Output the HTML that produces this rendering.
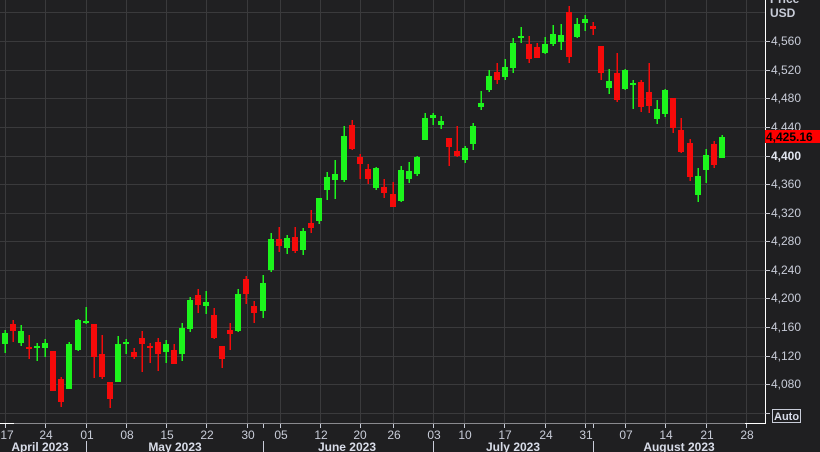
<!DOCTYPE html>
<html><head><style>
html,body{margin:0;padding:0;background:#1f1f21;overflow:hidden}
svg{display:block}
text{font-family:"Liberation Sans",sans-serif}
</style></head><body>
<svg width="820" height="452" viewBox="0 0 820 452" xmlns="http://www.w3.org/2000/svg">
<rect width="820" height="452" fill="#1f1f21"/>
<rect x="0" y="0" width="765" height="423" fill="#202022"/>
<g stroke="#3a3a3c" stroke-width="1">
<line x1="0" x2="765" y1="12.5" y2="12.5"/>
<line x1="0" x2="765" y1="41.5" y2="41.5"/><line x1="0" x2="765" y1="70.5" y2="70.5"/><line x1="0" x2="765" y1="98.5" y2="98.5"/><line x1="0" x2="765" y1="127.5" y2="127.5"/><line x1="0" x2="765" y1="156.5" y2="156.5"/><line x1="0" x2="765" y1="184.5" y2="184.5"/><line x1="0" x2="765" y1="213.5" y2="213.5"/><line x1="0" x2="765" y1="241.5" y2="241.5"/><line x1="0" x2="765" y1="270.5" y2="270.5"/><line x1="0" x2="765" y1="298.5" y2="298.5"/><line x1="0" x2="765" y1="327.5" y2="327.5"/><line x1="0" x2="765" y1="356.5" y2="356.5"/><line x1="0" x2="765" y1="384.5" y2="384.5"/><line x1="0" x2="765" y1="413.5" y2="413.5"/>
<line y1="0" y2="423" x1="5.5" x2="5.5"/><line y1="0" y2="423" x1="45.5" x2="45.5"/><line y1="0" y2="423" x1="86.5" x2="86.5"/><line y1="0" y2="423" x1="126.5" x2="126.5"/><line y1="0" y2="423" x1="166.5" x2="166.5"/><line y1="0" y2="423" x1="206.5" x2="206.5"/><line y1="0" y2="423" x1="247.5" x2="247.5"/><line y1="0" y2="423" x1="280.5" x2="280.5"/><line y1="0" y2="423" x1="320.5" x2="320.5"/><line y1="0" y2="423" x1="360.5" x2="360.5"/><line y1="0" y2="423" x1="393.5" x2="393.5"/><line y1="0" y2="423" x1="433.5" x2="433.5"/><line y1="0" y2="423" x1="464.5" x2="464.5"/><line y1="0" y2="423" x1="504.5" x2="504.5"/><line y1="0" y2="423" x1="545.5" x2="545.5"/><line y1="0" y2="423" x1="585.5" x2="585.5"/><line y1="0" y2="423" x1="625.5" x2="625.5"/><line y1="0" y2="423" x1="665.5" x2="665.5"/><line y1="0" y2="423" x1="706.5" x2="706.5"/><line y1="0" y2="423" x1="746.5" x2="746.5"/>
</g>
<g fill="#1cf51c">
<rect x="4.5" y="330" width="1.5" height="23"/><rect x="2" y="333" width="6" height="11"/>
<rect x="20.5" y="325" width="1.5" height="21"/><rect x="18" y="331" width="6" height="12"/>
<rect x="36.5" y="343" width="1.5" height="18"/><rect x="34" y="346" width="6" height="2"/>
<rect x="44.5" y="339" width="1.5" height="18"/><rect x="42" y="343" width="6" height="5"/>
<rect x="68.5" y="342" width="1.5" height="47"/><rect x="66" y="344" width="6" height="45"/>
<rect x="77.5" y="319" width="1.5" height="32"/><rect x="75" y="320" width="6" height="30"/>
<rect x="85.5" y="307" width="1.5" height="17"/><rect x="83" y="321" width="6" height="2"/>
<rect x="117.5" y="336" width="1.5" height="46"/><rect x="115" y="344" width="6" height="38"/>
<rect x="125.5" y="339" width="1.5" height="15"/><rect x="123" y="342" width="6" height="2"/>
<rect x="165.5" y="340" width="1.5" height="23"/><rect x="163" y="344" width="6" height="8"/>
<rect x="181.5" y="323" width="1.5" height="38"/><rect x="179" y="328" width="6" height="26"/>
<rect x="189.5" y="297" width="1.5" height="35"/><rect x="187" y="300" width="6" height="29"/>
<rect x="205.5" y="291" width="1.5" height="23"/><rect x="203" y="302" width="6" height="4"/>
<rect x="237.5" y="289" width="1.5" height="43"/><rect x="235" y="294" width="6" height="37"/>
<rect x="262.5" y="275" width="1.5" height="43"/><rect x="260" y="283" width="6" height="28"/>
<rect x="270.5" y="233" width="1.5" height="39"/><rect x="268" y="239" width="6" height="31"/>
<rect x="286.5" y="235" width="1.5" height="19"/><rect x="284" y="238" width="6" height="10"/>
<rect x="302.5" y="228" width="1.5" height="27"/><rect x="300" y="231" width="6" height="19"/>
<rect x="318.5" y="198" width="1.5" height="26"/><rect x="316" y="198" width="6" height="23"/>
<rect x="326.5" y="172" width="1.5" height="28"/><rect x="324" y="177" width="6" height="13"/>
<rect x="334.5" y="160" width="1.5" height="39"/><rect x="332" y="174" width="6" height="6"/>
<rect x="343.5" y="126" width="1.5" height="56"/><rect x="341" y="136" width="6" height="44"/>
<rect x="375.5" y="167" width="1.5" height="23"/><rect x="373" y="168" width="6" height="20"/>
<rect x="400.5" y="166" width="1.5" height="36"/><rect x="398" y="170" width="6" height="31"/>
<rect x="408.5" y="162" width="1.5" height="21"/><rect x="406" y="171" width="6" height="8"/>
<rect x="416.5" y="156" width="1.5" height="20"/><rect x="414" y="157" width="6" height="17"/>
<rect x="424.5" y="113" width="1.5" height="27"/><rect x="422" y="118" width="6" height="22"/>
<rect x="432.5" y="113" width="1.5" height="12"/><rect x="430" y="115" width="6" height="3"/>
<rect x="440.5" y="116" width="1.5" height="13"/><rect x="438" y="121" width="6" height="4"/>
<rect x="464.5" y="146" width="1.5" height="17"/><rect x="462" y="148" width="6" height="12"/>
<rect x="472.5" y="123" width="1.5" height="27"/><rect x="470" y="126" width="6" height="18"/>
<rect x="480.5" y="91" width="1.5" height="19"/><rect x="478" y="103" width="6" height="4"/>
<rect x="488.5" y="70" width="1.5" height="22"/><rect x="486" y="76" width="6" height="14"/>
<rect x="504.5" y="59" width="1.5" height="21"/><rect x="502" y="67" width="6" height="10"/>
<rect x="512.5" y="38" width="1.5" height="35"/><rect x="510" y="43" width="6" height="25"/>
<rect x="520.5" y="27" width="1.5" height="16"/><rect x="518" y="36" width="6" height="2"/>
<rect x="544.5" y="37" width="1.5" height="17"/><rect x="542" y="44" width="6" height="9"/>
<rect x="552.5" y="25" width="1.5" height="21"/><rect x="550" y="34" width="6" height="10"/>
<rect x="560.5" y="24" width="1.5" height="26"/><rect x="558" y="35" width="6" height="7"/>
<rect x="576.5" y="18" width="1.5" height="20"/><rect x="574" y="24" width="6" height="13"/>
<rect x="584.5" y="15" width="1.5" height="16"/><rect x="582" y="19" width="6" height="4"/>
<rect x="608.5" y="69" width="1.5" height="25"/><rect x="606" y="81" width="6" height="7"/>
<rect x="624.5" y="69" width="1.5" height="21"/><rect x="622" y="70" width="6" height="19"/>
<rect x="632.5" y="80" width="1.5" height="29"/><rect x="630" y="83" width="6" height="2"/>
<rect x="656.5" y="100" width="1.5" height="24"/><rect x="654" y="109" width="6" height="10"/>
<rect x="664.5" y="89" width="1.5" height="28"/><rect x="662" y="90" width="6" height="24"/>
<rect x="697.5" y="168" width="1.5" height="34"/><rect x="695" y="176" width="6" height="19"/>
<rect x="705.5" y="149" width="1.5" height="34"/><rect x="703" y="155" width="6" height="15"/>
<rect x="721.5" y="135" width="1.5" height="23"/><rect x="719" y="137" width="6" height="21"/>
</g>
<g fill="#f50a0a">
<rect x="12.5" y="320" width="1.5" height="22"/><rect x="10" y="324" width="6" height="7"/>
<rect x="28.5" y="335" width="1.5" height="24"/><rect x="26" y="347" width="6" height="2"/>
<rect x="52.5" y="351" width="1.5" height="40"/><rect x="50" y="351" width="6" height="40"/>
<rect x="60.5" y="377" width="1.5" height="30"/><rect x="58" y="379" width="6" height="23"/>
<rect x="93.5" y="324" width="1.5" height="54"/><rect x="91" y="324" width="6" height="33"/>
<rect x="101.5" y="335" width="1.5" height="44"/><rect x="99" y="354" width="6" height="23"/>
<rect x="109.5" y="382" width="1.5" height="26"/><rect x="107" y="382" width="6" height="17"/>
<rect x="133.5" y="348" width="1.5" height="11"/><rect x="131" y="352" width="6" height="5"/>
<rect x="141.5" y="331" width="1.5" height="41"/><rect x="139" y="338" width="6" height="6"/>
<rect x="149.5" y="343" width="1.5" height="20"/><rect x="147" y="346" width="6" height="2"/>
<rect x="157.5" y="338" width="1.5" height="33"/><rect x="155" y="342" width="6" height="12"/>
<rect x="173.5" y="344" width="1.5" height="20"/><rect x="171" y="350" width="6" height="14"/>
<rect x="197.5" y="289" width="1.5" height="24"/><rect x="195" y="295" width="6" height="10"/>
<rect x="213.5" y="308" width="1.5" height="31"/><rect x="211" y="315" width="6" height="23"/>
<rect x="221.5" y="346" width="1.5" height="22"/><rect x="219" y="346" width="6" height="13"/>
<rect x="229.5" y="323" width="1.5" height="27"/><rect x="227" y="330" width="6" height="4"/>
<rect x="245.5" y="276" width="1.5" height="28"/><rect x="243" y="279" width="6" height="15"/>
<rect x="253.5" y="301" width="1.5" height="22"/><rect x="251" y="306" width="6" height="7"/>
<rect x="278.5" y="227" width="1.5" height="25"/><rect x="276" y="239" width="6" height="7"/>
<rect x="294.5" y="227" width="1.5" height="26"/><rect x="292" y="237" width="6" height="14"/>
<rect x="310.5" y="210" width="1.5" height="23"/><rect x="308" y="223" width="6" height="5"/>
<rect x="351.5" y="120" width="1.5" height="30"/><rect x="349" y="125" width="6" height="24"/>
<rect x="359.5" y="154" width="1.5" height="25"/><rect x="357" y="157" width="6" height="7"/>
<rect x="367.5" y="164" width="1.5" height="20"/><rect x="365" y="169" width="6" height="10"/>
<rect x="383.5" y="179" width="1.5" height="19"/><rect x="381" y="187" width="6" height="6"/>
<rect x="392.5" y="182" width="1.5" height="25"/><rect x="390" y="194" width="6" height="13"/>
<rect x="448.5" y="138" width="1.5" height="28"/><rect x="446" y="138" width="6" height="9"/>
<rect x="456.5" y="126" width="1.5" height="31"/><rect x="454" y="151" width="6" height="5"/>
<rect x="496.5" y="63" width="1.5" height="21"/><rect x="494" y="72" width="6" height="8"/>
<rect x="528.5" y="36" width="1.5" height="27"/><rect x="526" y="44" width="6" height="15"/>
<rect x="536.5" y="43" width="1.5" height="15"/><rect x="534" y="47" width="6" height="11"/>
<rect x="568.5" y="6" width="1.5" height="57"/><rect x="566" y="12" width="6" height="45"/>
<rect x="592.5" y="22" width="1.5" height="13"/><rect x="590" y="26" width="6" height="3"/>
<rect x="600.5" y="46" width="1.5" height="34"/><rect x="598" y="46" width="6" height="27"/>
<rect x="616.5" y="53" width="1.5" height="49"/><rect x="614" y="73" width="6" height="27"/>
<rect x="640.5" y="80" width="1.5" height="32"/><rect x="638" y="82" width="6" height="25"/>
<rect x="648.5" y="63" width="1.5" height="50"/><rect x="646" y="92" width="6" height="14"/>
<rect x="672.5" y="98" width="1.5" height="35"/><rect x="670" y="98" width="6" height="30"/>
<rect x="680.5" y="118" width="1.5" height="35"/><rect x="678" y="130" width="6" height="22"/>
<rect x="689.5" y="139" width="1.5" height="42"/><rect x="687" y="143" width="6" height="34"/>
<rect x="713.5" y="141" width="1.5" height="27"/><rect x="711" y="144" width="6" height="21"/>
</g>
<!-- axes -->
<line x1="0" x2="765" y1="423.5" y2="423.5" stroke="#8a8a8e"/>
<line x1="0" x2="14" y1="423.5" y2="423.5" stroke="#ffffff"/>
<line x1="745" x2="765" y1="423.5" y2="423.5" stroke="#ffffff"/>
<line x1="765.5" x2="765.5" y1="0" y2="424" stroke="#ffffff"/>
<g stroke="#c8c8d0">
<line x1="765" x2="770" y1="41.5" y2="41.5"/><line x1="765" x2="770" y1="70.5" y2="70.5"/><line x1="765" x2="770" y1="98.5" y2="98.5"/><line x1="765" x2="770" y1="127.5" y2="127.5"/><line x1="765" x2="770" y1="156.5" y2="156.5"/><line x1="765" x2="770" y1="184.5" y2="184.5"/><line x1="765" x2="770" y1="213.5" y2="213.5"/><line x1="765" x2="770" y1="241.5" y2="241.5"/><line x1="765" x2="770" y1="270.5" y2="270.5"/><line x1="765" x2="770" y1="298.5" y2="298.5"/><line x1="765" x2="770" y1="327.5" y2="327.5"/><line x1="765" x2="770" y1="356.5" y2="356.5"/><line x1="765" x2="770" y1="384.5" y2="384.5"/><line x1="765" x2="770" y1="413.5" y2="413.5"/>
</g>
<g fill="#c8ccd8" font-size="12">
<text x="771" y="45">4,560</text><text x="771" y="74">4,520</text><text x="771" y="102">4,480</text><text x="771" y="131">4,440</text><text x="771" y="188">4,360</text><text x="771" y="217">4,320</text><text x="771" y="245">4,280</text><text x="771" y="274">4,240</text><text x="771" y="302">4,200</text><text x="771" y="331">4,160</text><text x="771" y="360">4,120</text><text x="771" y="388">4,080</text>
<text x="771" y="160" font-weight="bold" fill="#e0e4ee">4,400</text>
<text x="770" y="3" font-weight="bold">Price</text>
<text x="770" y="17" font-weight="bold">USD</text>
</g>
<rect x="765" y="130" width="55" height="13" fill="#ff0000"/>
<text x="766" y="141" font-size="12" font-weight="bold" fill="#000">4,425.16</text>
<rect x="772.5" y="409.5" width="28" height="13" fill="none" stroke="#c8ccd8"/>
<text x="774" y="420" font-size="11" font-weight="bold" fill="#d8dce8">Auto</text>
<g stroke="#c8ccd8">
<line x1="5.5" x2="5.5" y1="424" y2="428"/><line x1="45.5" x2="45.5" y1="424" y2="428"/><line x1="86.5" x2="86.5" y1="424" y2="428"/><line x1="126.5" x2="126.5" y1="424" y2="428"/><line x1="166.5" x2="166.5" y1="424" y2="428"/><line x1="206.5" x2="206.5" y1="424" y2="428"/><line x1="247.5" x2="247.5" y1="424" y2="428"/><line x1="263.5" x2="263.5" y1="424" y2="428"/><line x1="280.5" x2="280.5" y1="424" y2="428"/><line x1="320.5" x2="320.5" y1="424" y2="428"/><line x1="360.5" x2="360.5" y1="424" y2="428"/><line x1="393.5" x2="393.5" y1="424" y2="428"/><line x1="433.5" x2="433.5" y1="424" y2="428"/><line x1="464.5" x2="464.5" y1="424" y2="428"/><line x1="504.5" x2="504.5" y1="424" y2="428"/><line x1="545.5" x2="545.5" y1="424" y2="428"/><line x1="585.5" x2="585.5" y1="424" y2="428"/><line x1="593.5" x2="593.5" y1="424" y2="428"/><line x1="625.5" x2="625.5" y1="424" y2="428"/><line x1="665.5" x2="665.5" y1="424" y2="428"/><line x1="706.5" x2="706.5" y1="424" y2="428"/><line x1="746.5" x2="746.5" y1="424" y2="428"/>
<line x1="86.5" x2="86.5" y1="441" y2="452"/><line x1="263.5" x2="263.5" y1="441" y2="452"/><line x1="433.5" x2="433.5" y1="441" y2="452"/><line x1="593.5" x2="593.5" y1="441" y2="452"/>
</g>
<g fill="#c8ccd8" font-size="12" text-anchor="middle">
<text x="7" y="439">17</text><text x="46" y="439">24</text><text x="87" y="439">01</text><text x="127" y="439">08</text><text x="167" y="439">15</text><text x="207" y="439">22</text><text x="248" y="439">30</text><text x="281" y="439">05</text><text x="321" y="439">12</text><text x="360" y="439">20</text><text x="394" y="439">26</text><text x="434" y="439">03</text><text x="465" y="439">10</text><text x="505" y="439">17</text><text x="546" y="439">24</text><text x="586" y="439">31</text><text x="626" y="439">07</text><text x="666" y="439">14</text><text x="707" y="439">21</text><text x="747" y="439">28</text>
</g>
<g fill="#d8dce8" font-size="12" font-weight="bold" text-anchor="middle">
<text x="40" y="451">April 2023</text><text x="175" y="451">May 2023</text><text x="347" y="451">June 2023</text><text x="513" y="451">July 2023</text><text x="679" y="451">August 2023</text>
</g>
</svg>
</body></html>
